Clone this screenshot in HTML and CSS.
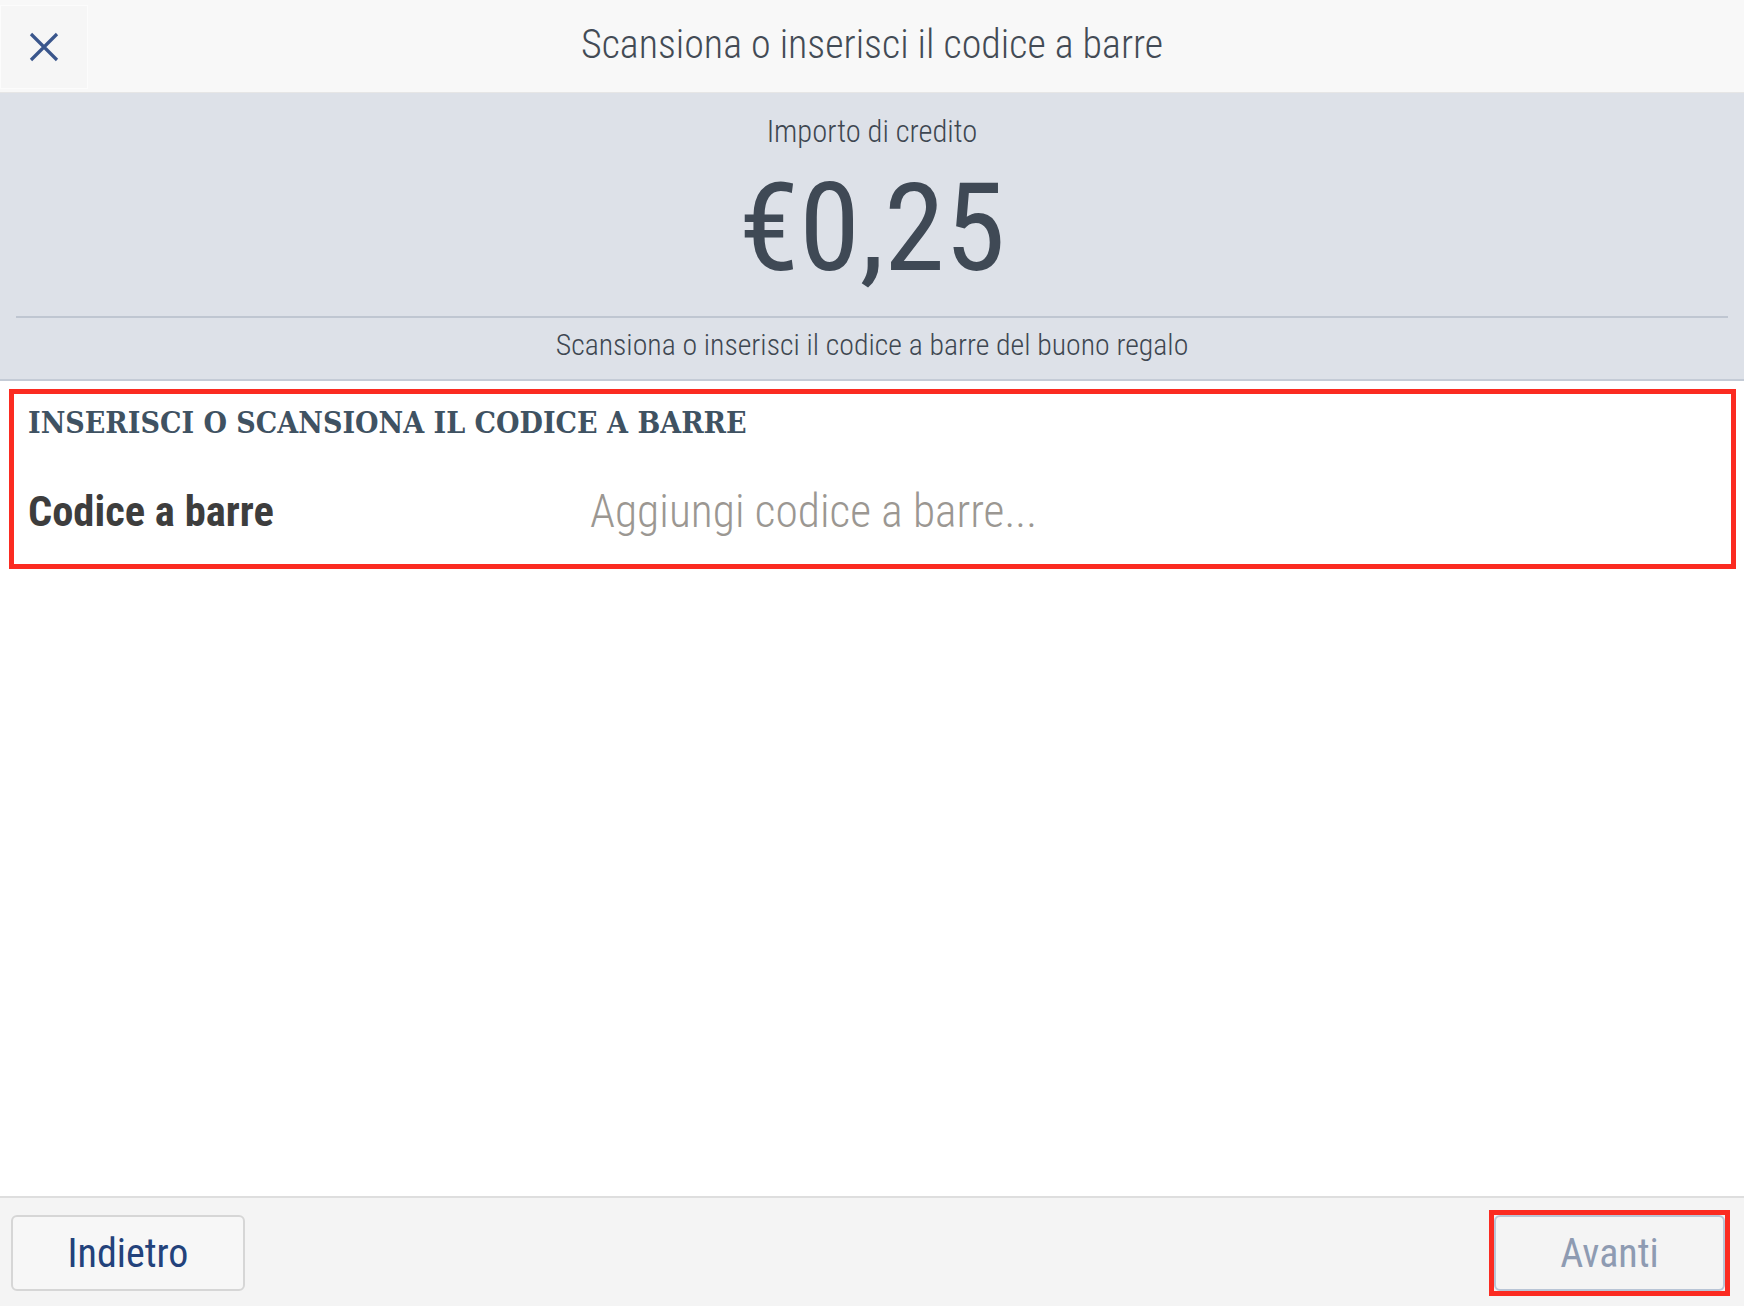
FILE: index.html
```html
<html>
  <head>
    <link rel="stylesheet" href="styles.css">
  </head>
  <body>
    <header class="topbar">
      <button class="close" aria-label="Chiudi">
        <svg width="30" height="30" viewBox="0 0 30 30">
          <path d="M2 2 L28 28 M28 2 L2 28" stroke="#3a568c" stroke-width="3.2" fill="none"/>
        </svg>
      </button>
      <div class="title">Scansiona o inserisci il codice a barre</div>
      <div class="spacer-cell"></div>
    </header>

    <section class="summary">
      <div class="summary-label">Importo di credito</div>
      <div class="amount">€0,25</div>
      <div class="divider"></div>
      <div class="summary-hint">Scansiona o inserisci il codice a barre del buono regalo</div>
    </section>

    <section class="form">
      <div class="form-heading">INSERISCI O SCANSIONA IL CODICE A BARRE</div>
      <div class="form-row">
        <div class="form-label">Codice a barre</div>
        <div class="form-input">Aggiungi codice a barre...</div>
      </div>
    </section>

    <main class="fill"></main>

    <footer class="bottombar">
      <button class="btn btn-back">Indietro</button>
      <div class="highlight">
        <button class="btn btn-next">Avanti</button>
      </div>
    </footer>
  </body>
</html>
```
FILE: styles.css
```css
html {
  background: white;
  font-family: Roboto, "Open Sans", sans-serif;
  font-stretch: condensed;
}
body {
  margin: 0;
  height: 100vh;
  display: flex;
  flex-direction: column;
}
button {
  font-family: inherit;
  font-stretch: inherit;
}

/* top bar */
.topbar {
  height: 92px;
  display: grid;
  grid-template-columns: 88px 1fr 88px;
  align-items: center;
  background: #f8f8f8;
  border-bottom: 1px solid #e6e6e6;
}
.close {
  height: 84px;
  margin-top: 2px;
  display: flex;
  justify-content: center;
  align-items: center;
  background: #f6f6f6;
  border: 1px solid #fcfcfc;
  padding: 0;
}
.title {
  margin-top: -3px;
  text-align: center;
  font-size: 40px;
  font-weight: 300;
  line-height: 50px;
  color: #434b55;
}

/* amount band */
.summary {
  background: #dde1e8;
  border-bottom: 2px solid #c4cbd6;
  padding: 22px 0 14px;
  text-align: center;
  color: #3e4751;
}
.summary-label {
  font-size: 30.5px;
  font-weight: 300;
  line-height: 34px;
}
.amount {
  margin-top: 19px;
  font-size: 123px;
  line-height: 120px;
  color: #3f4955;
}
.divider {
  margin: 28px 16px 0;
  height: 2px;
  background: #bfc6d1;
}
.summary-hint {
  margin-top: 7px;
  font-size: 29.8px;
  font-weight: 300;
  line-height: 40px;
}

/* barcode form */
.form {
  margin: 8px 8px 0 9px;
  border: 5px solid #fb2b21;
  padding: 9px 14px 27px;
}
.form-heading {
  font-family: "DejaVu Serif Condensed", "DejaVu Serif", serif;
  font-stretch: condensed;
  font-weight: bold;
  font-size: 30px;
  line-height: 40px;
  color: #3f5262;
}
.form-row {
  margin-top: 44px;
  display: grid;
  grid-template-columns: 562px 1fr;
  line-height: 50px;
}
.form-label {
  font-size: 42.5px;
  font-weight: bold;
  color: #3d3d3d;
}
.form-input {
  font-size: 45.5px;
  font-weight: 300;
  color: #9b9792;
}

.fill {
  flex: 1;
}

/* bottom bar */
.bottombar {
  background: #f4f4f4;
  border-top: 2px solid #dedede;
  padding: 12px 14px 10px 11px;
  display: flex;
  justify-content: space-between;
  align-items: center;
}
.btn {
  height: 76px;
  font-size: 40px;
  border-radius: 6px;
  padding: 0;
}
.btn-back {
  width: 234px;
  background: #f7f7f7;
  border: 2px solid #d6d6d6;
  color: #23427b;
}
.highlight {
  border: 5px solid #fb2b21;
  display: flex;
}
.btn-next {
  width: 231px;
  background: #f4f4f4;
  border: 2px solid #b9c5d6;
  color: #8e9bb2;
}
```
